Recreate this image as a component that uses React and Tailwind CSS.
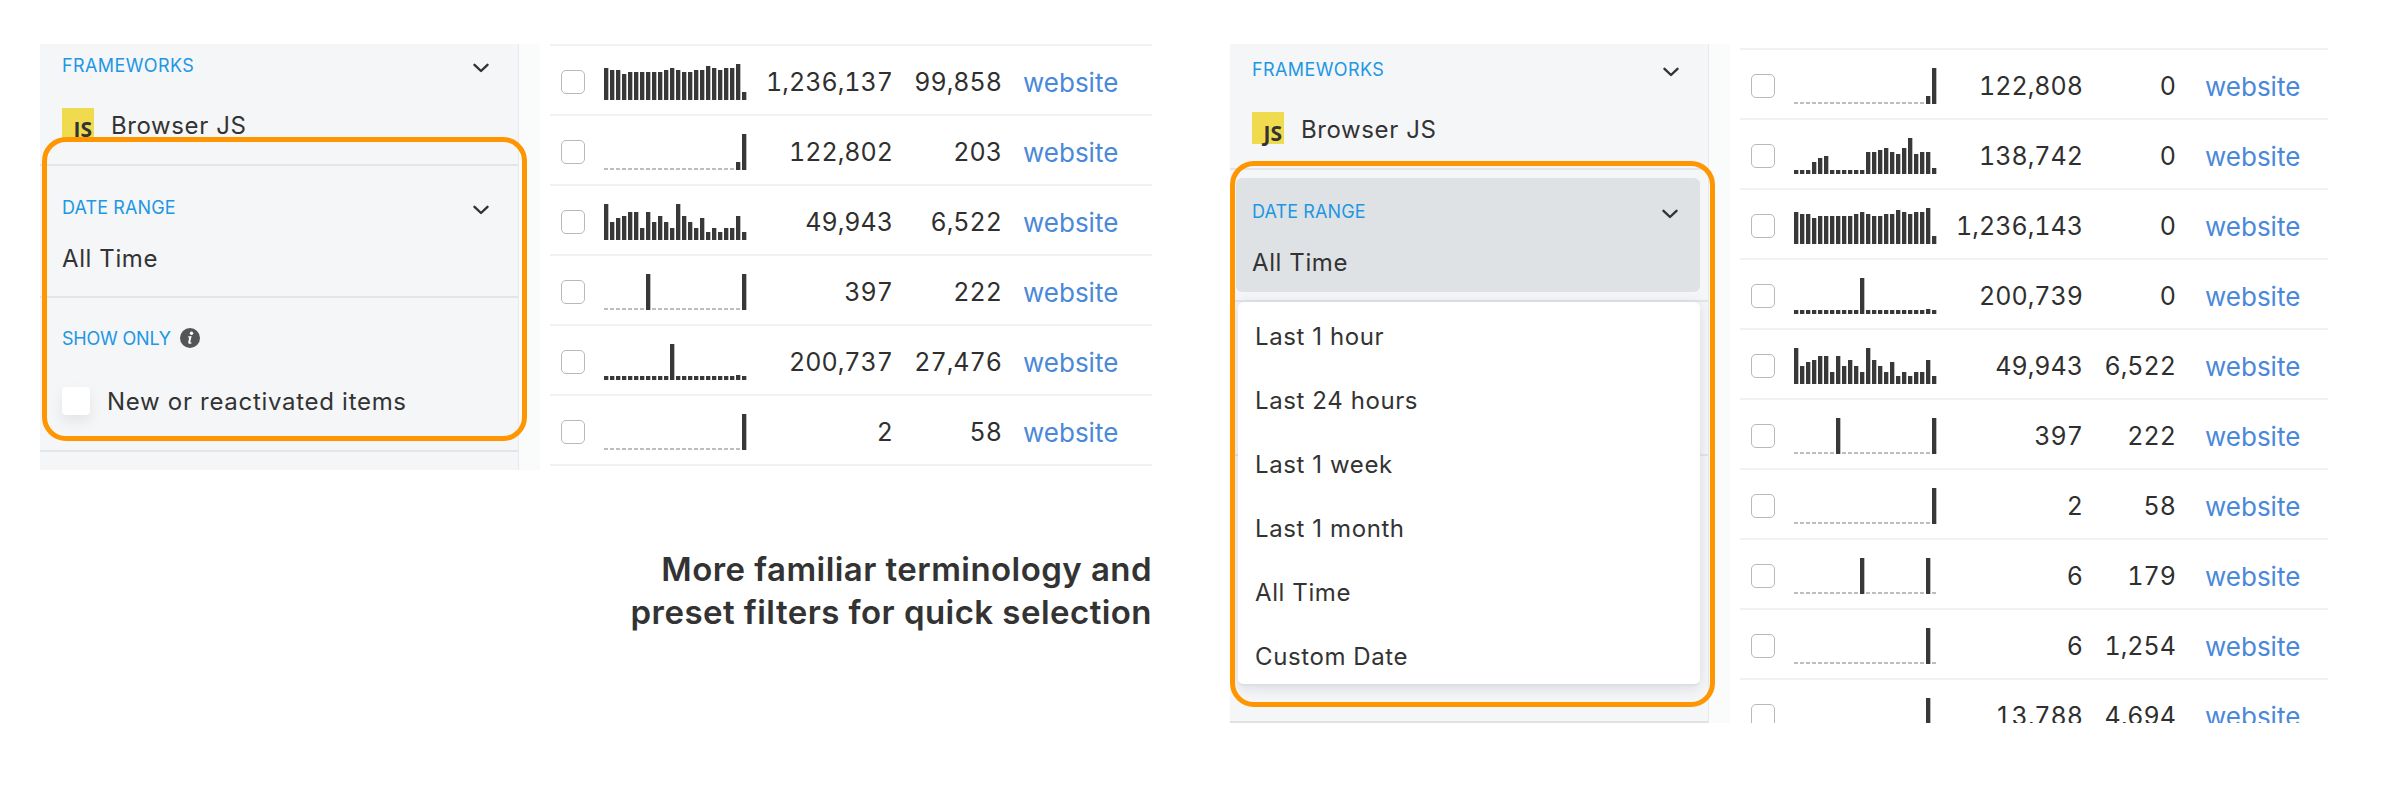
const ROW1 = [32,30,30,26,28,28,28,28,28,28,30,32,30,28,28,30,30,34,32,30,32,32,36,8];
const ROW3 = [36,18,22,24,28,28,12,28,18,24,18,12,36,24,18,12,22,8,12,8,12,12,24,8];
const ROWB = [4,4,4,12,16,18,4,4,4,4,4,4,22,22,24,26,22,20,26,36,20,22,22,6];
const flat = (spikes) => Array.from({ length: 24 }, (_, i) => (spikes[i] !== undefined ? spikes[i] : 2));
const ROW2 = flat({ 22: 8, 23: 36 });
const ROW4 = flat({ 7: 36, 23: 36 });
const ROW6 = flat({ 23: 36 });
const ROW5 = Array.from({ length: 24 }, (_, i) => (i === 11 ? 36 : i === 22 ? 5 : 4));
const ROW8 = flat({ 11: 36, 22: 36 });
const ROW9 = flat({ 22: 36 });

const leftRows = [
  [ROW1, "1,236,137", "99,858"],
  [ROW2, "122,802", "203"],
  [ROW3, "49,943", "6,522"],
  [ROW4, "397", "222"],
  [ROW5, "200,737", "27,476"],
  [ROW6, "2", "58"],
];
const rightRows = [
  [ROW2, "122,808", "0"],
  [ROWB, "138,742", "0"],
  [ROW1, "1,236,143", "0"],
  [ROW5, "200,739", "0"],
  [ROW3, "49,943", "6,522"],
  [ROW4, "397", "222"],
  [ROW6, "2", "58"],
  [ROW8, "6", "179"],
  [ROW9, "6", "1,254"],
  [ROW9, "13,788", "4,694"],
];
const options = ["Last 1 hour", "Last 24 hours", "Last 1 week", "Last 1 month", "All Time", "Custom Date"];

function Bars({ values }) {
  return (
    <svg width="148" height="36" viewBox="0 0 148 36" className="shrink-0">
      {values.map((h, i) =>
        h <= 2 ? (
          <rect key={i} x={i * 6} y={34} width="4" height="2" fill="#bdbdbd" />
        ) : (
          <g key={i}>
            <rect x={i * 6 + 3} y={36 - h} width="2" height={h} fill="#bcbcbc" />
            <rect x={i * 6} y={36 - h} width="4" height={h} fill="#383838" />
          </g>
        )
      )}
    </svg>
  );
}

function Row({ row, col2, link }) {
  return (
    <div className="h-[70px] shrink-0 border-b-2 border-[#f1f1f1] flex items-center pl-[11px] pt-[4px]">
      <span className="w-[24px] h-[24px] shrink-0 rounded-[5px] border border-[#b9b9b9] bg-white" />
      <span className="ml-[19px] flex"><Bars values={row[0]} /></span>
      <span className="w-[141px] text-right pt-[2px] text-[25px] text-[#2f2f2f] tabular-nums">{row[1]}</span>
      <span className={`${col2} text-right pt-[2px] text-[25px] text-[#2f2f2f] tabular-nums`}>{row[2]}</span>
      <span className={`${link} text-[26px] text-[#4a88da]`}>website</span>
    </div>
  );
}

function Chevron() {
  return (
    <svg width="16" height="10" viewBox="0 0 16 10" className="mt-[6px] shrink-0" fill="none" stroke="#333" strokeWidth="2.4" strokeLinecap="round" strokeLinejoin="round">
      <path d="M1.5 1.8 L8 8 L14.5 1.8" />
    </svg>
  );
}

function Header({ children, track }) {
  return (
    <div className="h-[28px] flex items-center justify-between pr-[29px]">
      <span className={`${track} pt-[2px] text-[18px] text-[#2196e3] leading-[28px]`}>{children}</span>
      <Chevron />
    </div>
  );
}

function Js() {
  return (
    <div className="flex items-center h-[32px] mt-[29px] gap-[17px]">
      <span className="w-[32px] h-[32px] bg-[#f0db4f] flex items-end justify-end pr-[2px] font-['Open_Sans'] font-bold text-[21px] leading-[21px] text-[#333]">JS</span>
      <span className="pt-[3px] text-[24px] tracking-[0.6px] text-[#333] leading-[32px]">Browser JS</span>
    </div>
  );
}

function Info() {
  return (
    <svg width="20" height="20" viewBox="0 0 20 20" className="ml-[9px]">
      <circle cx="10" cy="10" r="10" fill="#555" />
      <circle cx="11.5" cy="5.2" r="1.7" fill="#fff" />
      <path d="M8 8.4 L11.6 8 L10.3 14 Q10.2 14.9 11.6 14.4 L11.4 15.4 Q8 16.6 8.2 14.2 L9.2 9.6 L8 9.5 Z" fill="#fff" />
    </svg>
  );
}

function LeftPanel() {
  return (
    <div className="relative w-[500px] h-[426px] shrink-0 bg-[#fafbfb]">
      <div className="w-[479px] h-full bg-[#f5f6f8] border-r border-[#e8e9eb]">
        <div className="h-[122px] border-b-2 border-[#e3e5e8] pl-[22px] pt-[7px]">
          <Header track="tracking-[0.4px]">FRAMEWORKS</Header>
          <Js />
        </div>
        <div className="h-[132px] border-b-2 border-[#e3e5e8] pl-[22px] pt-[27px]">
          <Header track="tracking-[0.1px]">DATE RANGE</Header>
          <div className="mt-[22px] text-[24px] leading-[32px] tracking-[0.6px] text-[#333]">All Time</div>
        </div>
        <div className="h-[154px] border-b-2 border-[#e3e5e8] pl-[22px] pt-[26px]">
          <div className="h-[28px] flex items-center text-[18px] tracking-[-0.2px] text-[#2196e3]">SHOW ONLY<Info /></div>
          <div className="mt-[32px] flex items-center gap-[17px]">
            <span className="w-[28px] h-[28px] rounded-[4px] bg-white shadow-[0_6px_14px_rgba(0,0,0,0.08)]" />
            <span className="pt-[2px] text-[24px] leading-[32px] tracking-[0.7px] text-[#333]">New or reactivated items</span>
          </div>
        </div>
      </div>
      <div className="absolute left-[2px] top-[93px] w-[485px] h-[304px] rounded-[24px] border-[5px] border-[#ff9500]" />
    </div>
  );
}

function RightPanel() {
  return (
    <div className="relative w-[500px] h-[679px] shrink-0 bg-[#fafbfb]">
      <div className="w-[479px] h-full bg-[#f5f6f8] border-r border-[#e8e9eb]">
        <div className="h-[126px] border-b-2 border-[#e3e5e8] pl-[22px] pt-[11px]">
          <Header track="tracking-[0.4px]">FRAMEWORKS</Header>
          <Js />
        </div>
        <div className="h-[132px] border-b-2 border-[#e3e5e8] pt-[8px] pl-[6px] pr-[8px]">
          <div className="h-[114px] rounded-[6px] bg-[#dfe2e5] pl-[16px] pt-[19px]">
            <div className="-mr-[7px]"><Header track="tracking-[0.1px]">DATE RANGE</Header></div>
            <div className="mt-[22px] text-[24px] leading-[32px] tracking-[0.6px] text-[#333]">All Time</div>
          </div>
        </div>
        <div className="h-[154px] border-b-2 border-[#e3e5e8]" />
        <div className="h-[267px] border-b-2 border-[#dfe1e4]" />
      </div>
      <div className="absolute left-[8px] top-[258px] w-[462px] h-[384px] rounded-[6px] bg-white border-b-2 border-[#dde0e3] shadow-[0_2px_14px_rgba(40,60,70,0.14)] flex flex-col">
        {options.map((o) => (
          <div key={o} className="h-[64px] shrink-0 flex items-center pl-[17px] pt-[6px] text-[24px] tracking-[0.6px] text-[#333]">{o}</div>
        ))}
      </div>
      <div className="absolute left-0 top-[117px] w-[485px] h-[546px] rounded-[24px] border-[5px] border-[#ff9500]" />
    </div>
  );
}

export default function App() {
  return (
    <div className="w-[2408px] h-[790px] bg-white overflow-hidden flex font-['Inter',sans-serif] text-[24px]">
      <div className="ml-[40px] w-[1190px] shrink-0 pt-[44px]">
        <div className="flex">
          <LeftPanel />
          <div className="ml-[10px] w-[602px] border-t-2 border-[#f1f1f1] self-start">
            {leftRows.map((r, i) => (
              <Row key={i} row={r} col2="w-[109px]" link="ml-[21px]" />
            ))}
          </div>
        </div>
        <div className="mt-[78px] w-[1112px] text-right text-[33px] leading-[43px] font-semibold tracking-[0.45px] text-[#333]">
          <div>More familiar terminology and</div>
          <div>preset filters for quick selection</div>
        </div>
      </div>
      <div className="pt-[44px] flex items-start">
        <RightPanel />
        <div className="ml-[10px] w-[588px] mt-[4px] h-[675px] overflow-hidden border-t-2 border-[#f1f1f1] flex flex-col">
          {rightRows.map((r, i) => (
            <Row key={i} row={r} col2="w-[93px]" link="ml-[29px]" />
          ))}
        </div>
      </div>
    </div>
  );
}
